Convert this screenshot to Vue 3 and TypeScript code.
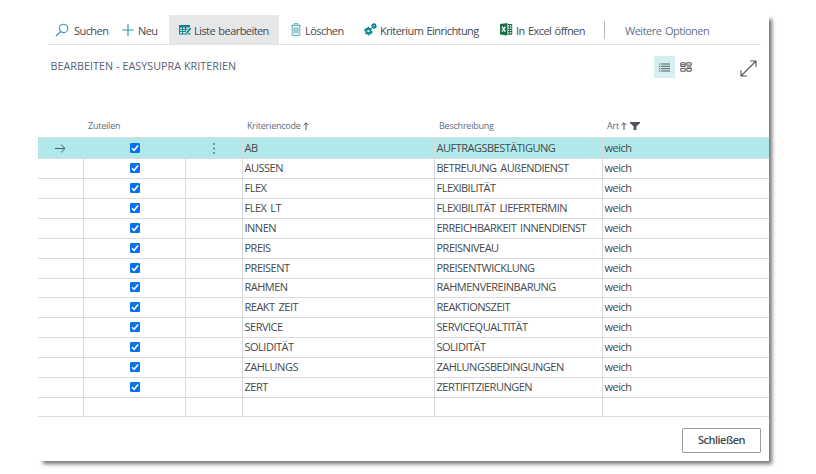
<script setup lang="ts">
interface Criterion {
  code: string
  description: string
}

const criteria: Criterion[] = [
  { code: 'AB', description: 'AUFTRAGSBESTÄTIGUNG' },
  { code: 'AUSSEN', description: 'BETREUUNG AUßENDIENST' },
  { code: 'FLEX', description: 'FLEXIBILITÄT' },
  { code: 'FLEX LT', description: 'FLEXIBILITÄT LIEFERTERMIN' },
  { code: 'INNEN', description: 'ERREICHBARKEIT INNENDIENST' },
  { code: 'PREIS', description: 'PREISNIVEAU' },
  { code: 'PREISENT', description: 'PREISENTWICKLUNG' },
  { code: 'RAHMEN', description: 'RAHMENVEREINBARUNG' },
  { code: 'REAKT ZEIT', description: 'REAKTIONSZEIT' },
  { code: 'SERVICE', description: 'SERVICEQUALTITÄT' },
  { code: 'SOLIDITÄT', description: 'SOLIDITÄT' },
  { code: 'ZAHLUNGS', description: 'ZAHLUNGSBEDINGUNGEN' },
  { code: 'ZERT', description: 'ZERTIFITZIERUNGEN' },
]
</script>

<template>
  <div class="page">
    <main class="dialog">
      <nav class="toolbar">
        <button class="action search">
          <svg width="14" height="14" viewBox="0 0 14 14" fill="none" stroke="#2b9aa3" stroke-width="1.1">
            <circle cx="8.6" cy="5.4" r="4.2" /><path d="M5.6 8.5 1 13" />
          </svg>
          <span>Suchen</span>
        </button>
        <button class="action new">
          <svg width="12" height="12" viewBox="0 0 12 12" stroke="#2b9aa3" stroke-width="1.2">
            <path d="M6 .3v11.4M.3 6h11.4" />
          </svg>
          <span>Neu</span>
        </button>
        <button class="action edit">
          <svg width="13" height="12" viewBox="0 0 13 12">
            <path fill="#0b848d" d="M0 1h11v3L6 10.5H0z" />
            <path fill="#e5e7e9" d="M1 3.5h2v1.3H1zM4 3.5h2v1.3H4zM7 3.5h3v1.3H7zM1 5.8h2v1.3H1zM4 5.8h2v1.3H4zM1 8.1h2v1.4H1zM4 8.1h2v1.4H4zM7 5.8h1.5v1.3H7z" />
            <path d="m11.6 4.3-5 6" stroke="#e5e7e9" stroke-width="3" />
            <path d="m11.7 4.3-3.9 4.6" stroke="#0b848d" stroke-width="1.7" />
            <path fill="#0b848d" d="m6.8 8.6 1.6 1.5-2.3.8zM9.3 9h2v1.5h-2z" />
          </svg>
          <span>Liste bearbeiten</span>
        </button>
        <button class="action delete">
          <svg width="10" height="13" viewBox="0 0 10 13" fill="none" stroke="#55adb5">
            <path d="M.2 2.4h9.6M3 2.2V.7h4v1.5M1.2 2.6v9.8h7.6V2.6" />
            <path stroke="#78bcc3" stroke-width="1.3" d="M3.2 4.2v6.4M5 4.2v6.4M6.8 4.2v6.4" />
          </svg>
          <span>Löschen</span>
        </button>
        <button class="action setup">
          <svg width="13" height="13" viewBox="0 0 13 13" fill="none" stroke="#0b848d">
            <circle cx="4.4" cy="8.1" r="2.1" stroke-width="1.8" />
            <path stroke-width="1.6" d="M4.4 3.8v2M4.4 10.4v2M.2 6.9l2 .6M6.6 8.7l2 .6M1.3 11.2l1.6-1.5M6 6.6l1.5-1.5M1.7 5l1.4 1.5M5.9 9.8l1.4 1.5" />
            <circle cx="10" cy="3" r="1.4" stroke-width="1.5" />
            <path stroke-width="1.3" d="M10 0v1.4M10 4.6V6M7 2.4l1.5.3M11.5 3.3l1.5.3M8 5l1-1M11 2l1-1M8.2.9l1 1M10.8 4l1 1" />
          </svg>
          <span>Kriterium Einrichtung</span>
        </button>
        <button class="action excel">
          <svg width="13" height="13" viewBox="0 0 13 13">
            <path fill="#177347" d="M0 1 7.5 0v12.5L0 11.5z" />
            <path stroke="#fff" stroke-width="1.3" d="m2 3.7 3.3 5M5.3 3.7 2 8.7" />
            <path fill="#177347" d="M8 1h4.2v10.8H8z" />
            <path fill="#fff" d="M8 2.3h1.2v1.2H8zM10 2.3h1.4v1.2H10zM8 4.6h1.2v1.2H8zM10 4.6h1.4v1.2H10zM8 6.9h1.2v1.2H8zM10 6.9h1.4v1.2H10zM8 9.2h1.2v1.2H8zM10 9.2h1.4v1.2H10z" />
          </svg>
          <span>In Excel öffnen</span>
        </button>
        <i class="divider"></i>
        <button class="action more"><span>Weitere Optionen</span></button>
      </nav>

      <header class="heading">
        <h1>BEARBEITEN - EASYSUPRA KRITERIEN</h1>
        <div class="views">
          <button class="view selected" aria-label="Liste">
            <svg width="11" height="9" viewBox="0 0 11 9" stroke="#505c5e">
              <path d="M0 1h1.3M2.2 1H11M0 3.3h1.3M2.2 3.3H11M0 5.7h1.3M2.2 5.7H11M0 8h1.3M2.2 8H11" />
            </svg>
          </button>
          <button class="view" aria-label="Kacheln">
            <svg width="12" height="10" viewBox="0 0 12 10" fill="none" stroke="#505050">
              <path d="M.8.8h4.4v3.7H.8zM6.8.8h4.4v2.4H6.8zM6.5 5h5M.8 6.4h4.4v2.8H.8zM6.8 6.4h4.4v2.8H6.8zM1 2.8h4" />
            </svg>
          </button>
        </div>
        <button class="expand" aria-label="Vergrößern">
          <svg width="17" height="17" viewBox="0 0 17 17" fill="none" stroke="#555" stroke-width="1.1">
            <path d="M1 16 16 1M10.2 1H16v5.8M1 10.2V16h5.8" />
          </svg>
        </button>
      </header>

      <section class="table">
        <div class="row head">
          <span></span>
          <span class="label assign">Zuteilen</span>
          <span></span>
          <span class="label">Kriteriencode
            <svg width="6" height="8" viewBox="0 0 6 8" fill="none" stroke="#4c5058"><path d="M3 8V.9M.6 3.2 3 .8l2.4 2.4" /></svg>
          </span>
          <span class="label">Beschreibung</span>
          <span class="label">Art
            <svg width="6" height="8" viewBox="0 0 6 8" fill="none" stroke="#4c5058"><path d="M3 8V.9M.6 3.2 3 .8l2.4 2.4" /></svg>
            <svg class="filter" width="10" height="8" viewBox="0 0 10 8" fill="#505357"><path d="M0 0h10v1L6.4 4.6V8H3.6V4.6L0 1z" /></svg>
          </span>
        </div>
        <div v-for="(item, i) in criteria" :key="item.code" class="row" :class="{ current: i === 0 }">
          <span class="cell center">
            <svg v-if="i === 0" width="11" height="9" viewBox="0 0 11 9" fill="none" stroke="#426064"><path d="M0 4.5h10M6 .6l4 3.9-4 3.9" /></svg>
          </span>
          <span class="cell center">
            <svg width="10" height="10" viewBox="0 0 10 10"><rect width="10" height="10" rx="1.3" fill="#0872ed" /><path d="m2 5.2 2.1 2.1L8.1 2.5" fill="none" stroke="#fff" stroke-width="1.5" /></svg>
          </span>
          <span class="cell center">
            <svg v-if="i === 0" width="2" height="11" viewBox="0 0 2 11" fill="#40595c"><path d="M.2.2h1.5v1.5H.2zM.2 4.7h1.5v1.5H.2zM.2 9.2h1.5v1.5H.2z" /></svg>
          </span>
          <span class="cell text">{{ item.code }}</span>
          <span class="cell text">{{ item.description }}</span>
          <span class="cell text kind">weich</span>
        </div>
        <div class="row">
          <span v-for="n in 6" :key="n" class="cell"></span>
        </div>
      </section>

      <footer class="footer">
        <button class="close">Schließen</button>
      </footer>
    </main>
  </div>
</template>

<style>
body {
  background: #fff;
}
</style>

<style scoped>
.page {
  box-sizing: border-box;
  height: 474px;
  padding: 14px 0 0 38px;
}
.dialog {
  box-sizing: border-box;
  width: 731px;
  height: 447px;
  display: flex;
  flex-direction: column;
  background: #fff;
  box-shadow: 4px 4px 4px -1px rgba(0, 0, 0, 0.55);
  color: #46494c;
  font: 11px/16px "Open Sans", "Noto Sans", sans-serif;
  clip-path: inset(0 -20px -20px 0);
}
button {
  margin: 0;
  padding: 0;
  border: 0;
  background: none;
  color: inherit;
  font: inherit;
  letter-spacing: inherit;
  word-spacing: inherit;
  white-space: nowrap;
}
svg {
  display: block;
  flex: none;
}
.toolbar {
  box-sizing: border-box;
  height: 31px;
  margin: 0 8px 0 10px;
  padding: 1px 0 0 7px;
  display: grid;
  grid-template-columns: 67px 47px 122px 73px 136px 104px 21px 1fr;
  border-bottom: 1px solid #e2e4e9;
  letter-spacing: -0.56px;
  word-spacing: 1px;
}
.action {
  height: 29px;
  display: flex;
  align-items: center;
  gap: 3px;
}
.action span {
  padding-top: 2px;
}
.search {
  gap: 5px;
}
.new {
  gap: 4px;
}
.edit {
  width: 110px;
  padding-left: 10px;
  gap: 2px;
  background: #e5e7e9;
}
.delete {
  gap: 4px;
}
.divider {
  width: 1px;
  height: 18px;
  margin-top: 6px;
  background: #b4b9c5;
}
.more {
  color: #666f82;
  letter-spacing: -0.48px;
}
.heading {
  height: 44px;
  padding: 0 12px 0 12.5px;
  display: flex;
  align-items: center;
}
h1 {
  margin: 0 0 2px;
  flex: 1;
  font: 500 10.7px/14px "Open Sans", "Noto Sans", sans-serif;
  letter-spacing: 0.08px;
  color: #566176;
}
.views {
  display: flex;
  margin-right: 44px;
}
.view {
  width: 21px;
  height: 22px;
  display: grid;
  place-items: center;
}
.selected {
  background: #d6eef0;
}
.expand {
  padding-top: 2px;
}
.table {
  margin-top: 25px;
}
.row {
  display: grid;
  grid-template-columns: 46px 102px 57px 192px 168px 1fr;
  height: 19.93px;
}
.head {
  height: 23px;
  border-bottom: 1px solid #d9dbdf;
  color: #626b7c;
  font-size: 9px;
  line-height: 22px;
  letter-spacing: -0.22px;
}
.label {
  display: flex;
  align-items: center;
  gap: 2px;
  padding-left: 4px;
}
.filter {
  margin-left: 1px;
}
.cell {
  box-sizing: border-box;
  border-right: 1px solid #d9dbdf;
  border-bottom: 1px solid #d9dbdf;
}
.cell:last-child {
  border-right: 0;
}
.center {
  display: grid;
  place-items: center;
}
.text {
  padding-left: 1.5px;
  line-height: 20px;
  letter-spacing: -0.5px;
  word-spacing: 1.5px;
  white-space: nowrap;
}
.current {
  background: #b1e9eb;
}
.footer {
  display: flex;
  justify-content: flex-end;
  padding: 11px 8px 0 0;
}
.close {
  box-sizing: border-box;
  width: 79px;
  height: 25px;
  border: 1px solid #9c9c9c;
  border-radius: 1px;
  font-weight: 600;
  letter-spacing: -0.5px;
}
</style>
